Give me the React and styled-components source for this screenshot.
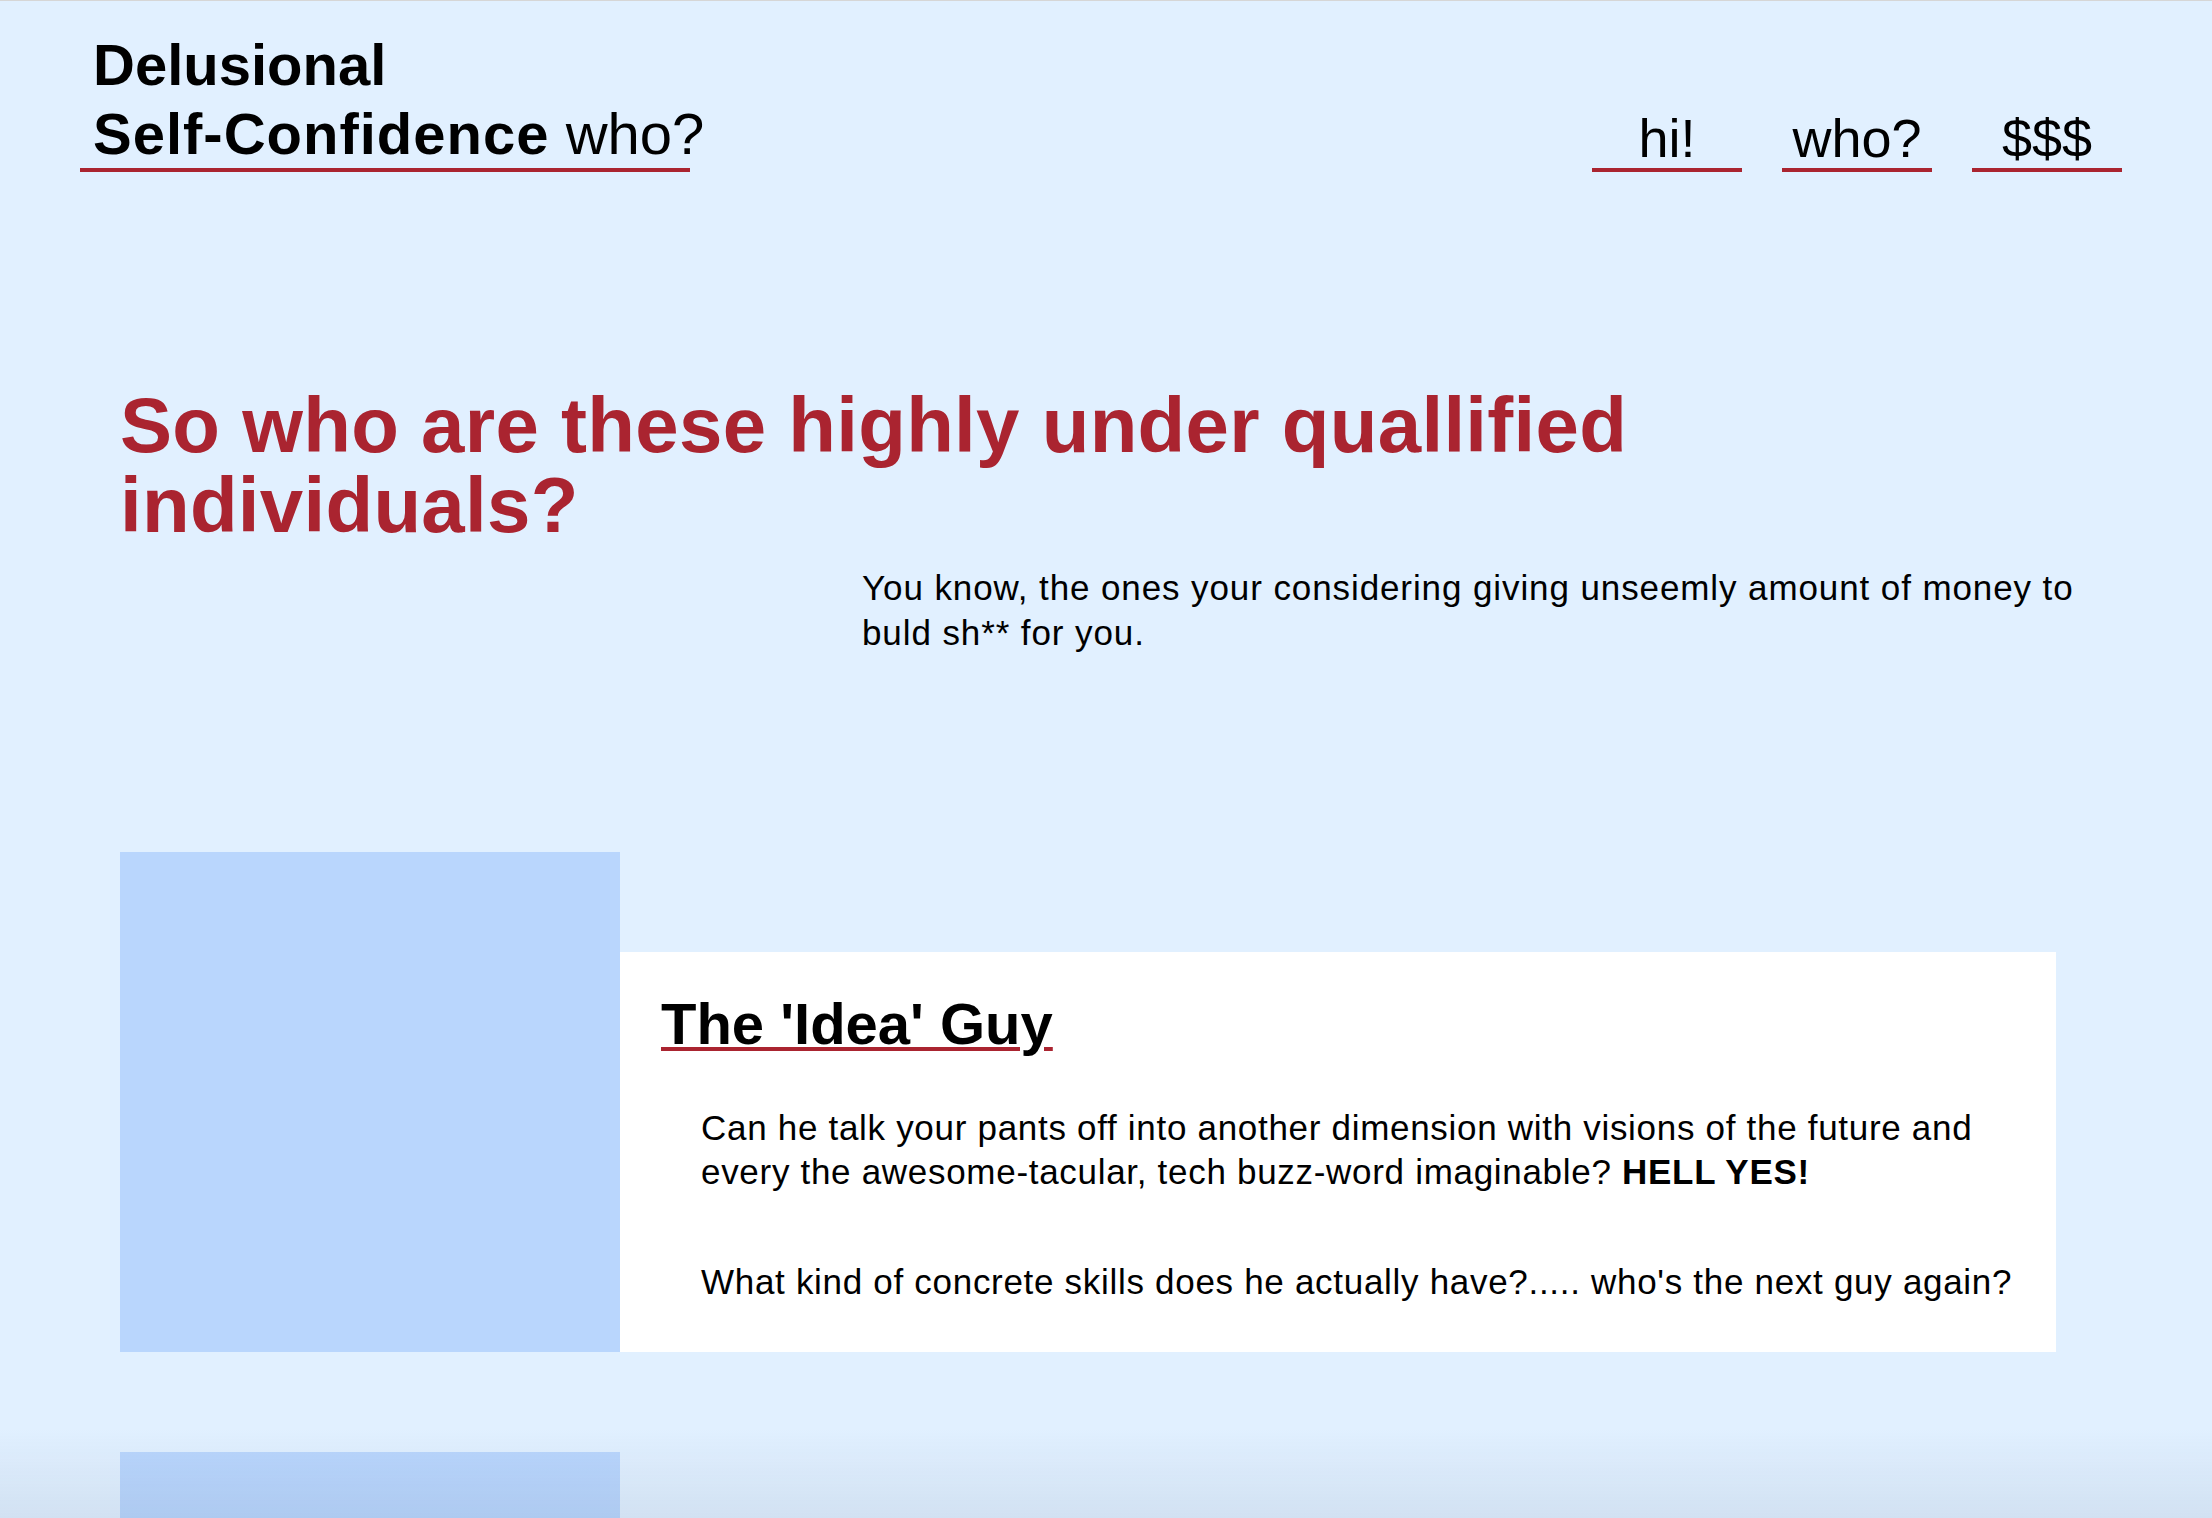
import React from "react";
import styled, { createGlobalStyle } from "styled-components";

const RED = "#aa2430";

const GlobalStyle = createGlobalStyle`
  body {
    margin: 0;
    background: #e1f0ff;
    border-top: 1px solid #d6d6d6;
    font-family: "Liberation Sans", Arial, sans-serif;
    color: #000;
  }

  body::after {
    content: "";
    position: fixed;
    left: 0;
    right: 0;
    bottom: 0;
    height: 90px;
    background: linear-gradient(to bottom, rgba(90, 110, 140, 0), rgba(90, 110, 140, 0.11));
    pointer-events: none;
  }
`;

const StyledHeader = styled.header`
  display: flex;
  justify-content: space-between;
  align-items: flex-end;
  padding: 29px 90px 0 80px;
`;

const Brand = styled.h1`
  box-sizing: border-box;
  width: 610px;
  margin: 0;
  padding-left: 13px;
  font-size: 58px;
  line-height: 69px;
  font-weight: 700;
  white-space: nowrap;
  border-bottom: 4px solid ${RED};

  strong {
    letter-spacing: 1px;
  }

  span {
    font-weight: 400;
  }
`;

const Nav = styled.nav`
  display: flex;
  gap: 40px;
`;

const NavLink = styled.a`
  width: 150px;
  text-align: center;
  font-size: 54px;
  line-height: 60px;
  color: #000;
  text-decoration: none;
  border-bottom: 4px solid ${RED};
`;

const Hero = styled.section`
  padding: 213px 120px 0;

  h2 {
    max-width: 1600px;
    margin: 0;
    font-size: 78px;
    line-height: 80px;
    font-weight: 700;
    letter-spacing: 0.3px;
    color: ${RED};
  }

  p {
    width: 1260px;
    margin: 20px 0 0 742px;
    font-size: 35px;
    line-height: 45px;
    letter-spacing: 0.9px;
  }
`;

const Crew = styled.section`
  display: flex;
  flex-direction: column;
  gap: 100px;
  padding: 197px 120px 0;
`;

const CrewRow = styled.article`
  display: grid;
  grid-template-columns: 500px 1436px;
  height: 500px;
`;

const Portrait = styled.div`
  background: #b9d6fd;
`;

const Card = styled.div`
  box-sizing: border-box;
  align-self: end;
  height: 400px;
  padding: 37px 36px 0 41px;
  background: #fff;

  h3 {
    margin: 0;
    font-size: 58px;
    line-height: 70px;
    font-weight: 700;
    text-decoration: underline ${RED};
    text-decoration-thickness: 4px;
    text-underline-offset: 3px;
  }

  p {
    max-width: 1330px;
    margin: 47px 0 0 40px;
    font-size: 35px;
    line-height: 44px;
    letter-spacing: 0.7px;
  }

  p + p {
    margin-top: 66px;
  }
`;

const crew = [
  {
    title: "The 'Idea' Guy",
    lines: [
      <>
        Can he talk your pants off into another dimension with visions of the future and every the
        awesome-tacular, tech buzz-word imaginable? <b>HELL YES!</b>
      </>,
      "What kind of concrete skills does he actually have?..... who's the next guy again?",
    ],
  },
  {
    title: "The 'Code' Guy",
    lines: ["Does he write code? Sure.", "Does it work? Ask him again tomorrow."],
  },
];

const App = () => (
  <>
    <GlobalStyle />
    <StyledHeader>
      <Brand>
        Delusional
        <br />
        <strong>Self-Confidence</strong> <span>who?</span>
      </Brand>
      <Nav>
        <NavLink href='#hi'>hi!</NavLink>
        <NavLink href='#who'>who?</NavLink>
        <NavLink href='#money'>$$$</NavLink>
      </Nav>
    </StyledHeader>

    <Hero>
      <h2>So who are these highly under quallified individuals?</h2>
      <p>You know, the ones your considering giving unseemly amount of money to buld sh** for you.</p>
    </Hero>

    <Crew id='who'>
      {crew.map((member, i) => (
        <CrewRow key={i}>
          <Portrait />
          <Card>
            <h3>{member.title}</h3>
            {member.lines.map((line, j) => (
              <p key={j}>{line}</p>
            ))}
          </Card>
        </CrewRow>
      ))}
    </Crew>
  </>
);

export default App;
